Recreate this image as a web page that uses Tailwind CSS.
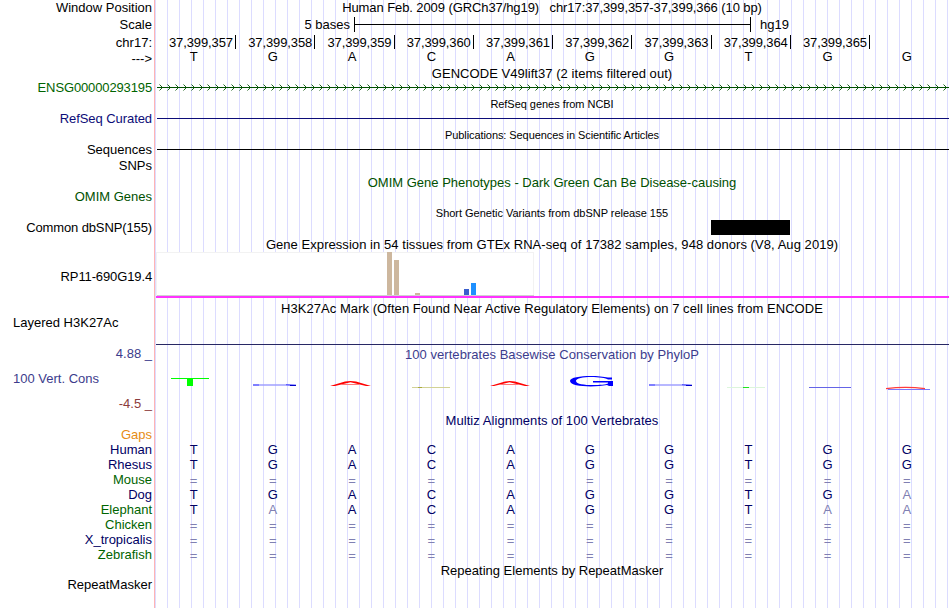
<!DOCTYPE html>
<html lang="en">
<head>
    <meta charset="UTF-8">
    <meta name="viewport" content="width=device-width, initial-scale=1.0">
    <title>Genome Browser - chr17:37,399,357-37,399,366</title>
    <script src="https://cdn.jsdelivr.net/npm/@tailwindcss/browser@4"></script>
</head>
<body class="bg-white text-black overflow-hidden">
    <main class="flex w-[950px] h-[608px] font-['Liberation_Sans',sans-serif] text-[13px] leading-4 whitespace-nowrap">
        <!-- Track labels -->
        <div class="w-[155px] shrink-0 border-r border-[#ffb4b4] pr-[2px] flex flex-col text-right">
            <div class="h-4">Window Position</div>
            <div class="h-4 mt-px">Scale</div>
            <div class="h-4 mt-0.5">chr17:</div>
            <div class="h-[15px]">---&gt;</div>
            <div class="h-4 mt-3.5 tracking-[-0.13px] text-[#006400]">ENSG00000293195</div>
            <div class="h-4 mt-[15px] tracking-[-0.07px] text-[#0c0c78]">RefSeq Curated</div>
            <div class="h-4 mt-[15px]">Sequences</div>
            <div class="h-4">SNPs</div>
            <div class="h-4 mt-[15px] text-[#005000]">OMIM Genes</div>
            <div class="h-4 mt-[15px] tracking-[-0.12px]">Common dbSNP(155)</div>
            <div class="h-4 mt-[33px] tracking-[-0.12px]">RP11-690G19.4</div>
            <div class="h-4 mt-[30px] pl-[13px] text-left">Layered H3K27Ac</div>
            <div class="h-4 mt-[15px] text-[#3c3c8c]">4.88 _</div>
            <div class="h-4 mt-[9px] pl-[13px] text-left text-[#3c3c8c]">100 Vert. Cons</div>
            <div class="h-4 mt-[9px] text-[#8c3c3c]">-4.5 _</div>
            <div class="mt-[15px] leading-[15px]">
                <div class="text-[#e68c14]">Gaps</div>
                <div class="text-[#000064]">Human</div>
                <div class="text-[#000064]">Rhesus</div>
                <div class="text-[#006400]">Mouse</div>
                <div class="text-[#000064]">Dog</div>
                <div class="text-[#006400]">Elephant</div>
                <div class="text-[#006400]">Chicken</div>
                <div class="text-[#000064]">X_tropicalis</div>
                <div class="text-[#006400]">Zebrafish</div>
            </div>
            <div class="h-4 mt-[15px]">RepeatMasker</div>
        </div>

        <!-- Tracks -->
        <div class="w-[794px] shrink-0 flex flex-col text-center bg-[linear-gradient(90deg,#dcdcff_1px,transparent_1px)] bg-[length:12px_100%] bg-[position:12px_0]">
            <div class="h-4 whitespace-pre tracking-[-0.09px]">Human Feb. 2009 (GRCh37/hg19)   chr17:37,399,357-37,399,366 (10 bp)</div>

            <!-- Scale bar -->
            <div class="h-[18px] flex items-center">
                <div class="w-[195px] text-right">5 bases</div>
                <div class="ml-1 w-[397px] h-[15px] -mt-px border-x border-black flex items-center"><div class="w-full h-px bg-black"></div></div>
                <div class="ml-[9px]">hg19</div>
            </div>

            <!-- Positions -->
            <div class="h-[15px] grid grid-cols-[81px_repeat(8,79.25px)] text-right leading-[15px] tracking-[-0.1px]">
                <div class="h-3.5 mt-px border-r border-black pr-0.5">37,399,357</div>
                <div class="h-3.5 mt-px border-r border-black pr-0.5">37,399,358</div>
                <div class="h-3.5 mt-px border-r border-black pr-0.5">37,399,359</div>
                <div class="h-3.5 mt-px border-r border-black pr-0.5">37,399,360</div>
                <div class="h-3.5 mt-px border-r border-black pr-0.5">37,399,361</div>
                <div class="h-3.5 mt-px border-r border-black pr-0.5">37,399,362</div>
                <div class="h-3.5 mt-px border-r border-black pr-0.5">37,399,363</div>
                <div class="h-3.5 mt-px border-r border-black pr-0.5">37,399,364</div>
                <div class="h-3.5 mt-px border-r border-black pr-0.5">37,399,365</div>
            </div>
            <div class="h-4 -ml-px grid grid-cols-[repeat(10,79.25px)]">
                <div>T</div><div>G</div><div>A</div><div>C</div><div>A</div><div>G</div><div>G</div><div>T</div><div>G</div><div>G</div>
            </div>

            <!-- Genes -->
            <div class="h-4 mt-px tracking-[0.05px]">GENCODE V49lift37 (2 items filtered out)</div>
            <svg class="ml-0.5 h-[11px] w-[792px]" fill="none">
                <defs>
                    <pattern id="arrows" width="8" height="11" patternUnits="userSpaceOnUse">
                        <path d="M2.5 2.5l3 3l-3 3" fill="none" stroke="#005000" stroke-width=".9"/>
                    </pattern>
                </defs>
                <path d="M0 5.5H792" stroke="#005000"/>
                <rect width="792" height="11" fill="url(#arrows)"/>
            </svg>
            <div class="h-4 mt-[3px] text-[11px] tracking-[-0.04px]">RefSeq genes from NCBI</div>
            <div class="h-px mt-1.5 ml-0.5 bg-[#0c0c78]"></div>
            <div class="h-4 mt-2 text-[11px] tracking-[-0.08px]">Publications: Sequences in Scientific Articles</div>
            <div class="h-px mt-1.5 ml-0.5 bg-black"></div>
            <div class="h-4 mt-[25px] text-[#005000]">OMIM Gene Phenotypes - Dark Green Can Be Disease-causing</div>
            <div class="h-4 mt-3.5 text-[11px] tracking-[-0.02px]">Short Genetic Variants from dbSNP release 155</div>
            <div class="h-[15px] -mt-px ml-[556px] w-[79px] bg-black"></div>
            <div class="h-4 mt-0.5 tracking-[0.055px]">Gene Expression in 54 tissues from GTEx RNA-seq of 17382 samples, 948 donors (V8, Aug 2019)</div>

            <!-- GTEx bars -->
            <svg class="-mt-px ml-px h-[46px] w-[793px]" shape-rendering="crispEdges">
                <path d="M.5 .5H377.5V43H.5z" fill="#fff" stroke="#f2f2f2"/>
                <path d="M1 43.5H378" stroke="#d0d0d0"/>
                <path d="M231 0h5v43h-5zM238 8h5v35h-5zM259 41h5v2h-5z" fill="#cdb79e"/>
                <path d="M308 37h5v6h-5z" fill="#3a5fcd"/>
                <path d="M315 31h5v12h-5z" fill="#1e90ff"/>
                <path d="M0 44H793V46H0z" fill="#ff32ff"/>
            </svg>
            <div class="h-4 mt-[3px] tracking-[0.05px]">H3K27Ac Mark (Often Found Near Active Regulatory Elements) on 7 cell lines from ENCODE</div>
            <div class="h-px mt-[27px] ml-px bg-[#282864]"></div>

            <!-- Conservation -->
            <div class="h-4 mt-0.5 tracking-[0.04px] text-[#3c3c8c]">100 vertebrates Basewise Conservation by PhyloP</div>
            <svg class="mt-1.5 h-[27px] w-[794px]" fill="none">
                <path d="M16 9.5H54" stroke="#0f0"/>
                <path d="M32 10h6v7h-6z" fill="#0f0"/>
                <path d="M98 16h43" stroke="#a0a0ff" stroke-width="1.4"/>
                <path d="M98 16h6M131 15.7L141 16.5" stroke="#4646ff"/>
                <path d="M135 16.5H141" stroke="#0000c8"/>
                <path d="M175 17L190 12.5Q195.500 11.500 201 12.500L216 17H211L195.500 13.300L180 17z" fill="#f00"/>
                <path d="M186 15.500H205" stroke="#ff7878"/>
                <path d="M257 18.500H295" stroke="#d2d296"/>
                <path d="M263 18.500H267" stroke="#aaaa3c"/>
                <path d="M335 17L350 12.500Q354.500 11.500 360 12.500L375 17H370L354.500 13.300L339 17z" fill="#f00"/>
                <path d="M345 15.500H364" stroke="#ff7878"/>
                <path d="M457 8.500V10.500H453C449 7.500 421 6.500 421 12C421 17.500 449 16.500 453 14.500V13.500H438V12H458V17H454L452 16C440 18.500 415 18 415 12C415 6 443 6 453 8.500z" fill="#00f"/>
                <path d="M494 16h43" stroke="#a0a0ff" stroke-width="1.4"/>
                <path d="M494 16h6M527 15.700L537 16.500" stroke="#4646ff"/>
                <path d="M531 16.500H537" stroke="#0000c8"/>
                <path d="M572 18.500H610" stroke="#dcf5dc"/>
                <path d="M588 18.500H594" stroke="#1ee61e"/>
                <path d="M654 18.500H696" stroke="#6464e6"/>
                <path d="M733 20.500H775" stroke="#7878ff"/>
                <path d="M731 19.700C744 18 757 18 770 19.700" stroke="#ff3c3c" stroke-width="1.300"/>
            </svg>

            <!-- Multiz alignments -->
            <div class="h-4 mt-[17px] tracking-[0.05px] text-[#000064]">Multiz Alignments of 100 Vertebrates</div>
            <div class="mt-[13px] -ml-px grid grid-cols-[repeat(10,79.25px)] auto-rows-[15px] leading-[15px] text-[#000064]">
                <div>T</div><div>G</div><div>A</div><div>C</div><div>A</div><div>G</div><div>G</div><div>T</div><div>G</div><div>G</div>
                <div>T</div><div>G</div><div>A</div><div>C</div><div>A</div><div>G</div><div>G</div><div>T</div><div>G</div><div>G</div>
                <div class="col-span-full grid grid-cols-subgrid pt-px text-[#8080b2]"><div>=</div><div>=</div><div>=</div><div>=</div><div>=</div><div>=</div><div>=</div><div>=</div><div>=</div><div>=</div></div>
                <div>T</div><div>G</div><div>A</div><div>C</div><div>A</div><div>G</div><div>G</div><div>T</div><div>G</div><div class="text-[#8080b2]">A</div>
                <div>T</div><div class="text-[#8080b2]">A</div><div>A</div><div>C</div><div>A</div><div>G</div><div>G</div><div>T</div><div class="text-[#8080b2]">A</div><div class="text-[#8080b2]">A</div>
                <div class="col-span-full grid grid-cols-subgrid pt-px text-[#8080b2]"><div>=</div><div>=</div><div>=</div><div>=</div><div>=</div><div>=</div><div>=</div><div>=</div><div>=</div><div>=</div></div>
                <div class="col-span-full grid grid-cols-subgrid pt-px text-[#8080b2]"><div>=</div><div>=</div><div>=</div><div>=</div><div>=</div><div>=</div><div>=</div><div>=</div><div>=</div><div>=</div></div>
                <div class="col-span-full grid grid-cols-subgrid pt-px text-[#8080b2]"><div>=</div><div>=</div><div>=</div><div>=</div><div>=</div><div>=</div><div>=</div><div>=</div><div>=</div><div>=</div></div>
            </div>
            <div class="h-4 mt-px">Repeating Elements by RepeatMasker</div>
        </div>
    </main>
</body>
</html>
